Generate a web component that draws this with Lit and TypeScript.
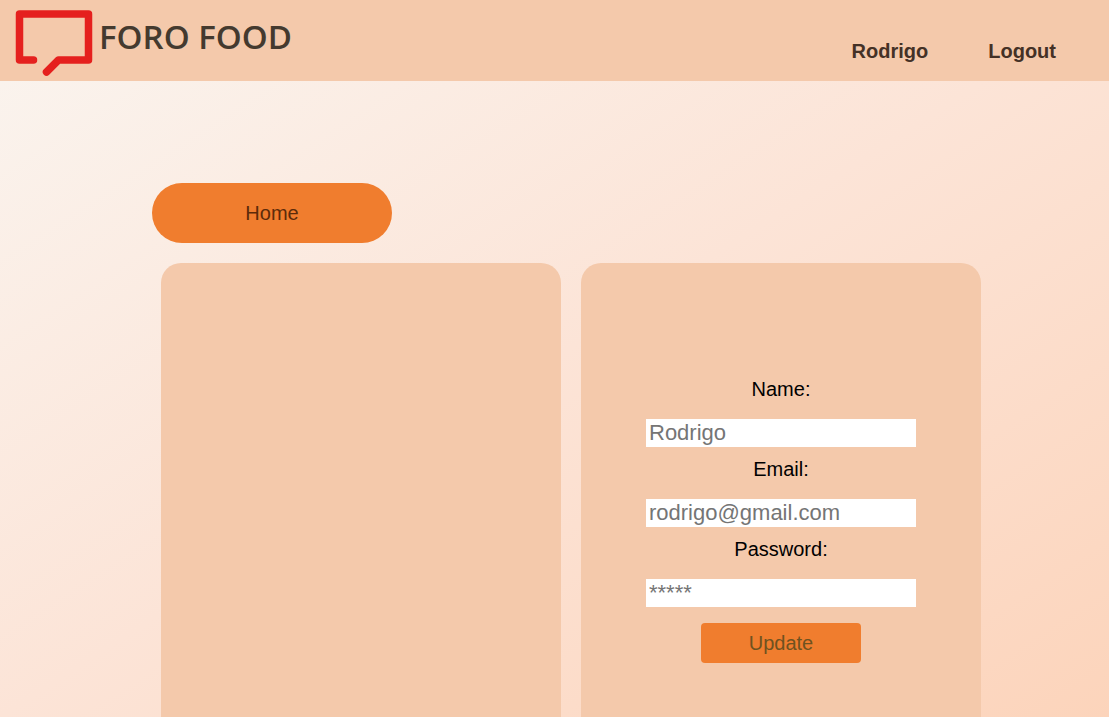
import { LitElement, html, css } from "lit";
import { customElement, state } from "lit/decorators.js";

interface Field {
  id: string;
  label: string;
  type: string;
  placeholder: string;
}

@customElement("forum-header")
class ForumHeader extends LitElement {
  static styles = css`
    :host {
      display: block;
    }
    .bar {
      display: flex;
      justify-content: space-between;
      box-sizing: border-box;
      min-height: 81px;
      padding: 0 53px 0 15px;
      background: #f4c9ab;
      color: #443126;
    }
    .brand {
      display: flex;
      gap: 6px;
      padding-top: 9px;
      color: #443a2f;
      text-decoration: none;
    }
    .mark {
      display: block;
      width: 78px;
      height: 68px;
    }
    .name {
      font: 600 33px/56px "Open Sans", sans-serif;
      white-space: nowrap;
    }
    .links {
      display: flex;
      align-items: center;
      gap: 60px;
      padding-top: 22px;
    }
    .link {
      color: inherit;
      font-size: 20px;
      font-weight: bold;
      text-decoration: none;
    }
  `;

  render() {
    return html`
      <header class="bar">
        <a class="brand" href="#">
          <svg class="mark" viewBox="0 0 78 68" aria-hidden="true">
            <path
              d="M18.500 51H4.500V5H73.500V51H43.500L31.500 63"
              fill="none"
              stroke="#e5201e"
              stroke-width="7.500"
              stroke-linecap="round"
              stroke-linejoin="round"
            />
          </svg>
          <span class="name">FORO FOOD</span>
        </a>
        <nav class="links">
          <a class="link" href="#">Rodrigo</a>
          <a class="link" href="#">Logout</a>
        </nav>
      </header>
    `;
  }
}

@customElement("profile-form")
class ProfileForm extends LitElement {
  static styles = css`
    :host {
      display: block;
    }
    .form {
      display: flex;
      flex-direction: column;
      align-items: center;
    }
    .field {
      display: flex;
      flex-direction: column;
      align-items: center;
      box-sizing: border-box;
      width: 270px;
      max-width: 100%;
      min-height: 80px;
    }
    .label {
      margin-bottom: 10px;
      font-size: 20px;
      line-height: 40px;
      color: #000;
    }
    .input {
      box-sizing: border-box;
      width: 100%;
      height: 28px;
      padding: 0 3px;
      border: 0;
      border-radius: 0;
      background: #fff;
      font: 22px "Liberation Sans", Arial, sans-serif;
    }
    .input::placeholder {
      color: #757575;
    }
    .submit {
      width: 160px;
      height: 40px;
      margin-top: 14px;
      padding: 0;
      border: 0;
      border-radius: 4px;
      background: #f07d2e;
      color: #6f5220;
      font: 20px "Liberation Sans", Arial, sans-serif;
    }
  `;

  @state() private fields: Field[] = [
    { id: "name", label: "Name:", type: "text", placeholder: "Rodrigo" },
    { id: "email", label: "Email:", type: "email", placeholder: "rodrigo@gmail.com" },
    { id: "password", label: "Password:", type: "password", placeholder: "*****" },
  ];

  render() {
    return html`
      <form class="form" @submit=${(e: Event) => e.preventDefault()}>
        ${this.fields.map(
          (f) => html`
            <div class="field">
              <label class="label" for=${f.id}>${f.label}</label>
              <input class="input" id=${f.id} type=${f.type} placeholder=${f.placeholder} />
            </div>
          `
        )}
        <button class="submit" type="submit">Update</button>
      </form>
    `;
  }
}

@customElement("app-root")
class AppRoot extends LitElement {
  static styles = css`
    :host {
      display: flex;
      flex-direction: column;
      height: 100vh;
      overflow: hidden;
      background: linear-gradient(to bottom right, #faf5f0, #fce4d7, #fcd4bb);
      font-family: "Liberation Sans", Arial, sans-serif;
    }
    .main {
      display: flex;
      flex: 1;
      flex-direction: column;
      align-items: flex-start;
      gap: 20px;
      padding: 102px 118px 0 152px;
    }
    .home {
      width: 240px;
      height: 60px;
      border: 0;
      border-radius: 30px;
      background: #f07d2e;
      color: #5c2b0a;
      font: 20px "Liberation Sans", Arial, sans-serif;
    }
    .panels {
      display: grid;
      flex: 1;
      grid-template-columns: repeat(2, minmax(0, 400px));
      gap: 20px;
      box-sizing: border-box;
      width: 100%;
      padding: 0 10px 0 9px;
    }
    .panel {
      box-sizing: border-box;
      padding: 106px 20px 0;
      border-radius: 20px 20px 0 0;
      background: #f4c9ab;
    }
  `;

  render() {
    return html`
      <forum-header></forum-header>
      <main class="main">
        <button class="home" type="button">Home</button>
        <div class="panels">
          <section class="panel"></section>
          <section class="panel"><profile-form></profile-form></section>
        </div>
      </main>
    `;
  }
}
